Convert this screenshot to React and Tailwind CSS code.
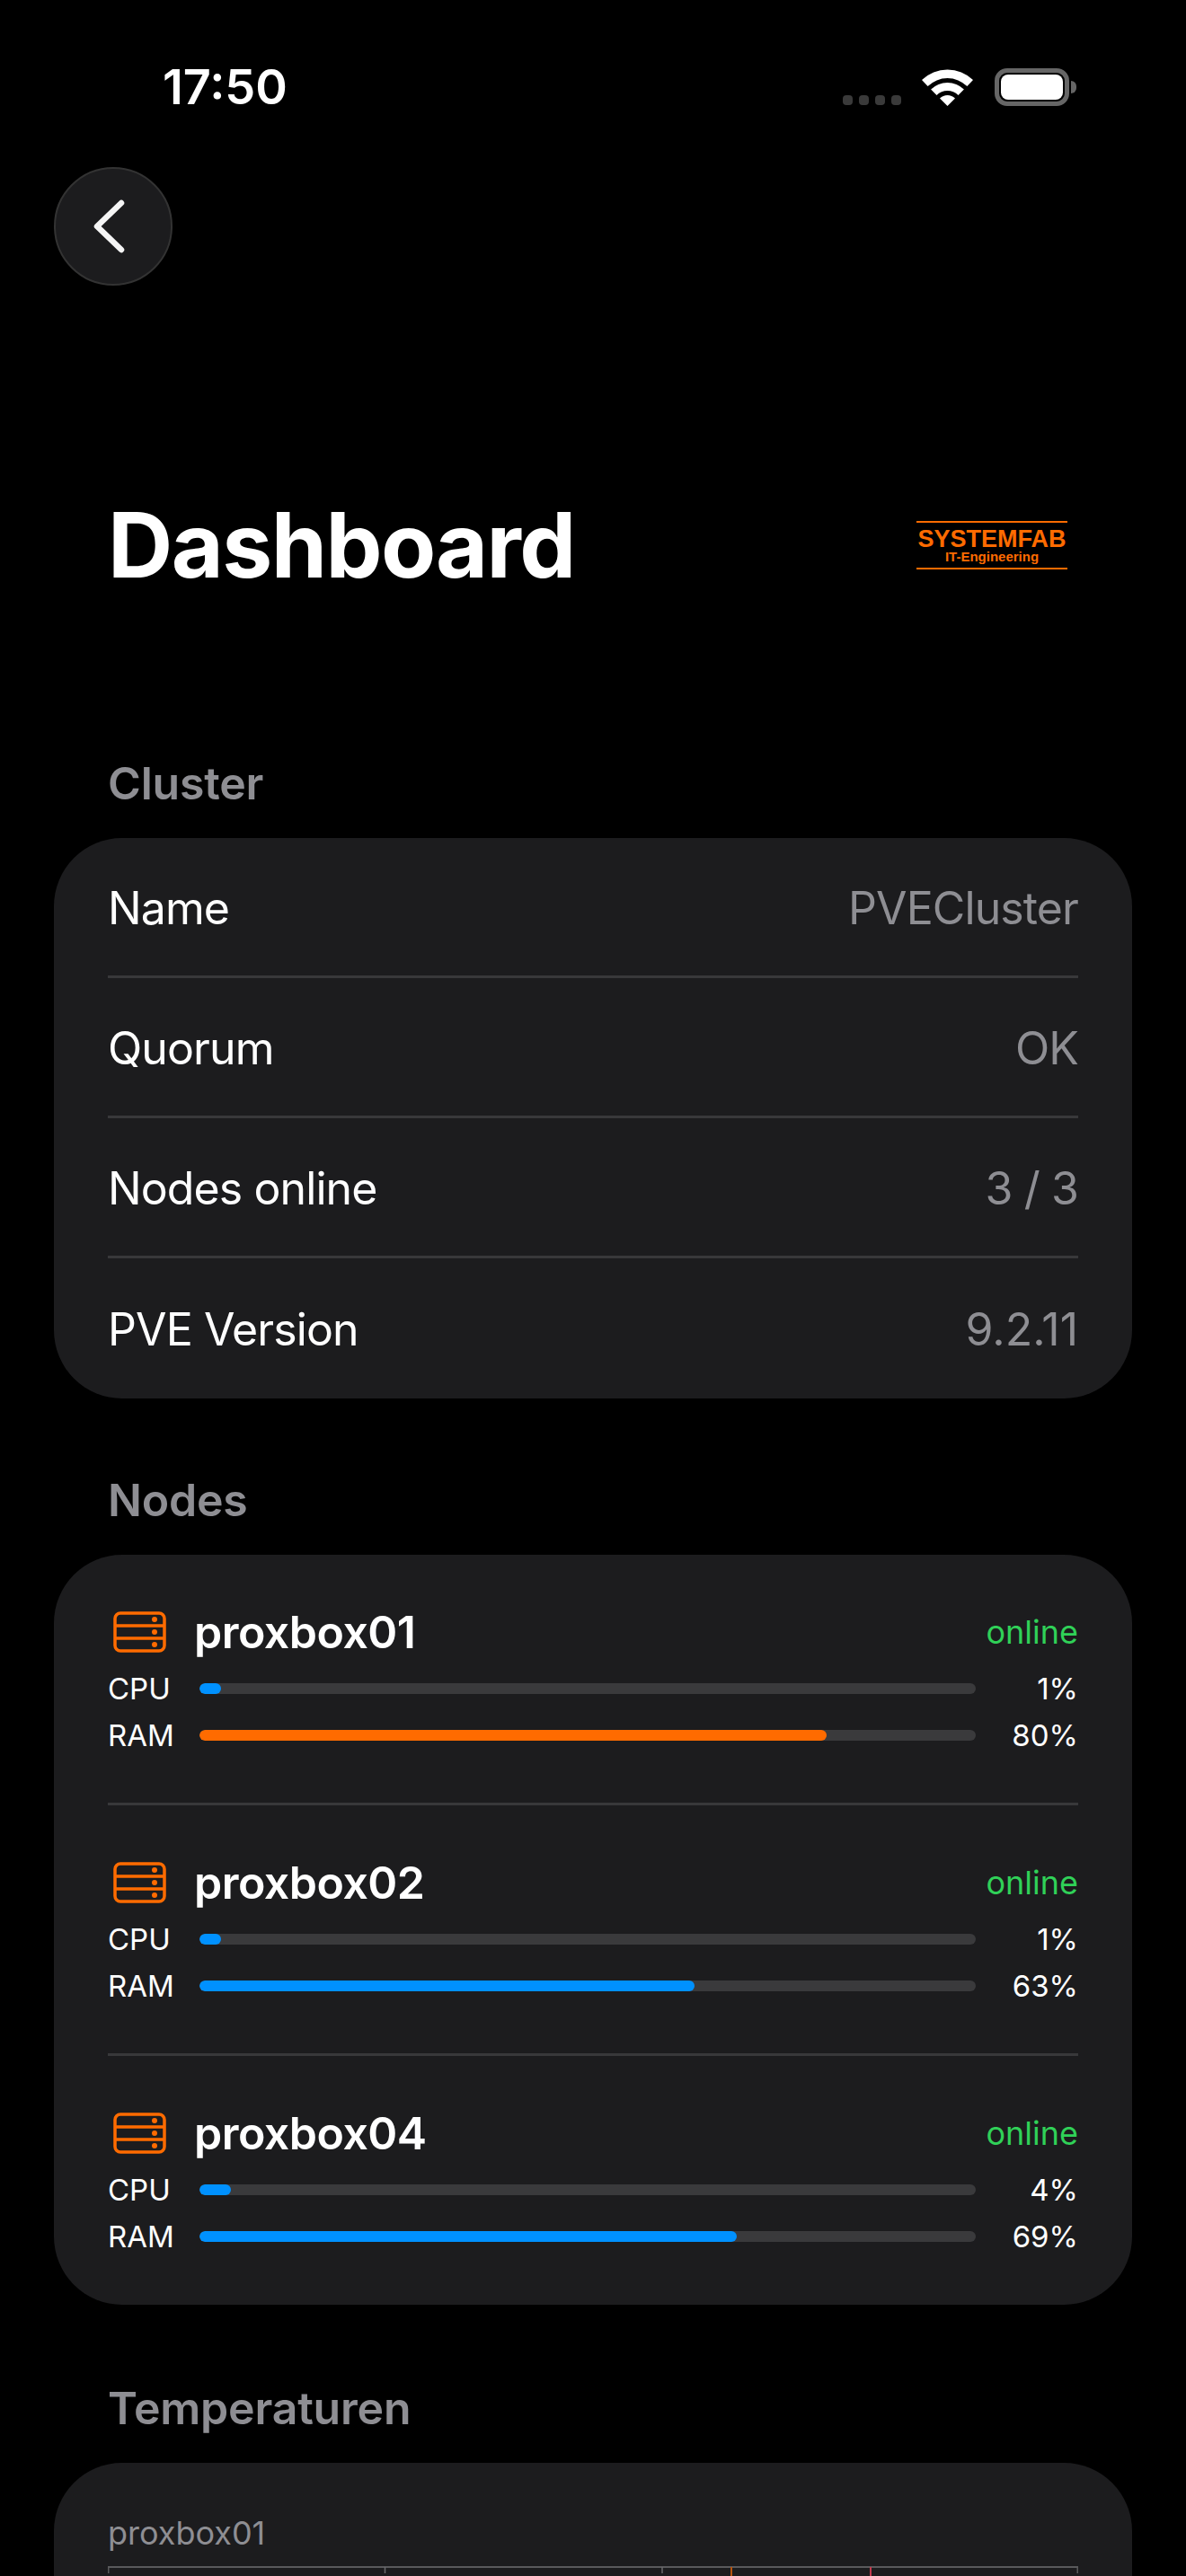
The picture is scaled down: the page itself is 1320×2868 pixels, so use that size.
import React from "react";

const clusterRows = [
  { label: "Name", value: "PVECluster" },
  { label: "Quorum", value: "OK" },
  { label: "Nodes online", value: "3 / 3" },
  { label: "PVE Version", value: "9.2.11", digits: true },
];

const nodes = [
  { name: "proxbox01", cpu: { label: 1, fill: 1 }, ram: { label: 80, fill: 80.8 }, hot: true },
  { name: "proxbox02", cpu: { label: 1, fill: 1 }, ram: { label: 63, fill: 63.8 } },
  { name: "proxbox04", cpu: { label: 4, fill: 4.1 }, ram: { label: 69, fill: 69.2 } },
];

function ServerIcon() {
  return (
    <svg width="59" height="46" viewBox="0 0 59 46" fill="none" className="shrink-0">
      <rect x="2" y="2" width="55" height="42" rx="6" stroke="#ff6b00" strokeWidth="3.5" />
      <path d="M2 16H57M2 30H57" stroke="#ff6b00" strokeWidth="3.5" />
      <circle cx="46" cy="9" r="3" fill="#ff6b00" />
      <circle cx="46" cy="23" r="3" fill="#ff6b00" />
      <circle cx="46" cy="37" r="3" fill="#ff6b00" />
    </svg>
  );
}

function Wifi() {
  return (
    <svg width="57" height="41" viewBox="0 0 57 41" fill="#fff">
      <path d="M0 12A41 41 0 0 1 57 12L50.4 19.1A31 31 0 0 0 6.6 19.1Z" />
      <path d="M10.1 22.6A26 26 0 0 1 46.9 22.6L40.5 29A17 17 0 0 0 16.5 29Z" />
      <path d="M20 32.5A12 12 0 0 1 37 32.5L28.5 41Z" />
    </svg>
  );
}

function Bar({ label, value, hot }) {
  return (
    <div className="flex items-center h-[52px]">
      <span className="w-[102px] text-[33px] leading-[40px] text-white">{label}</span>
      <div className="w-[864px] h-3 rounded-full bg-[#3a3a3c] overflow-hidden">
        <div
          className={`h-full rounded-full min-w-6 ${hot ? "bg-[#ff6b00]" : "bg-[#0091ff]"}`}
          style={{ width: `${value.fill}%` }}
        />
      </div>
      <span className="flex-1 text-right text-[33px] leading-[40px] text-white">{value.label}%</span>
    </div>
  );
}

function SectionTitle({ children }) {
  return (
    <h2 className="px-[120px] text-[50px] leading-[60px] font-semibold tracking-[-0.2px] text-[#8e8e93]">
      {children}
    </h2>
  );
}

export default function App() {
  return (
    <div
      className="h-[2868px] w-[1320px] overflow-hidden bg-black text-white"
      style={{ fontFamily: "Inter, sans-serif" }}
    >
      <div className="flex items-center justify-between pt-[70px] pl-[181px] pr-[122px] h-[124px]">
        <span className="text-[54px] leading-[54px] font-semibold">17:50</span>
        <div className="flex items-end">
          <div className="flex gap-[7px] mb-[1px]">
            <span className="w-[11px] h-[11px] rounded-[4px] bg-[#3a3a3a]" />
            <span className="w-[11px] h-[11px] rounded-[4px] bg-[#3a3a3a]" />
            <span className="w-[11px] h-[11px] rounded-[4px] bg-[#3a3a3a]" />
            <span className="w-[11px] h-[11px] rounded-[4px] bg-[#3a3a3a]" />
          </div>
          <div className="ml-[23px]">
            <Wifi />
          </div>
          <div className="ml-[24px] flex items-center">
            <div className="w-[83px] h-[42px] rounded-[14px] border-[5px] border-[#666666] p-[2px]">
              <div className="h-full rounded-[8px] bg-white" />
            </div>
            <div className="ml-[2px] w-[6px] h-[14px] rounded-r-full bg-[#666666]" />
          </div>
        </div>
      </div>

      <div className="ml-[60px] mt-[62px] flex h-[132px] w-[132px] items-center justify-center rounded-full border-2 border-[#333333] bg-[#1c1c1e] pr-[10px]">
        <svg width="36" height="60" viewBox="0 0 36 60" fill="none">
          <path d="M32 4L5 30L32 56" stroke="#f5f5f5" strokeWidth="6.5" strokeLinecap="round" strokeLinejoin="round" />
        </svg>
      </div>

      <div className="mt-[253px] flex items-center justify-between pl-[120px] pr-[132px] h-[72px]">
        <h1 className="text-[100px] leading-[72px] font-bold tracking-[-1.5px]">Dashboard</h1>
        <div
          className="flex w-[168px] flex-col items-center border-y-2 border-[#ff6b00] h-[54px] text-[#ff6b00] pt-[5px]"
          style={{ fontFamily: "'Liberation Sans', sans-serif" }}
        >
          <span className="text-[27px] leading-[26px] font-bold whitespace-nowrap">SYSTEMFAB</span>
          <span className="text-[15px] leading-[14px] font-bold whitespace-nowrap">IT-Engineering</span>
        </div>
      </div>

      <div className="mt-[199px]">
        <SectionTitle>Cluster</SectionTitle>
      </div>
      <div className="mx-[60px] mt-[31px] rounded-[76px] bg-[#1c1c1e] px-[60px]">
        {clusterRows.map((row, i) => (
          <div
            key={row.label}
            className={`flex h-[156px] items-center justify-between pt-[3px] text-[50px] tracking-[-0.9px] ${
              i < clusterRows.length - 1 ? "border-b-[3px] border-[#38383a]" : ""
            }`}
          >
            <span>{row.label}</span>
            <span className={row.digits ? "text-[#8e8e93] tracking-[0px]" : "text-[#8e8e93]"}>{row.value}</span>
          </div>
        ))}
      </div>

      <div className="mt-[83px]">
        <SectionTitle>Nodes</SectionTitle>
      </div>
      <div className="mx-[60px] mt-[31px] rounded-[76px] bg-[#1c1c1e] px-[60px] pt-[54px] pb-[50px]">
        {nodes.map((node, i) => (
          <div
            key={node.name}
            className={i < nodes.length - 1 ? "border-b-[3px] border-[#38383a] pb-[49px] mb-[54px]" : ""}
          >
            <div className="flex items-center h-[64px] pl-[6px] mb-[5px]">
              <ServerIcon />
              <span className="ml-[31px] flex-1 text-[50px] leading-[64px] font-semibold tracking-[-0.5px]">
                {node.name}
              </span>
              <span className="text-[36px] text-[#30d158]">online</span>
            </div>
            <Bar label="CPU" value={node.cpu} />
            <Bar label="RAM" value={node.ram} hot={node.hot} />
          </div>
        ))}
      </div>

      <div className="mt-[85px]">
        <SectionTitle>Temperaturen</SectionTitle>
      </div>
      <div className="mx-[60px] mt-[31px] h-[300px] rounded-t-[76px] bg-[#1c1c1e] px-[60px] pt-[56px]">
        <div className="text-[36px] leading-[44px] text-[#8e8e93]">proxbox01</div>
        <svg width="1080" height="20" viewBox="0 0 1080 20" className="mt-[15px] block">
          <path d="M0.5 8V1H1079.5V8" fill="none" stroke="#5a5a5c" strokeWidth="2" />
          <path d="M308.5 1V8M617 1V8" stroke="#6a6a6c" strokeWidth="1.5" />
          <path d="M694 1V20" stroke="#b85510" strokeWidth="2" />
          <path d="M849 1V20" stroke="#c23a4e" strokeWidth="2" />
        </svg>
      </div>
    </div>
  );
}
